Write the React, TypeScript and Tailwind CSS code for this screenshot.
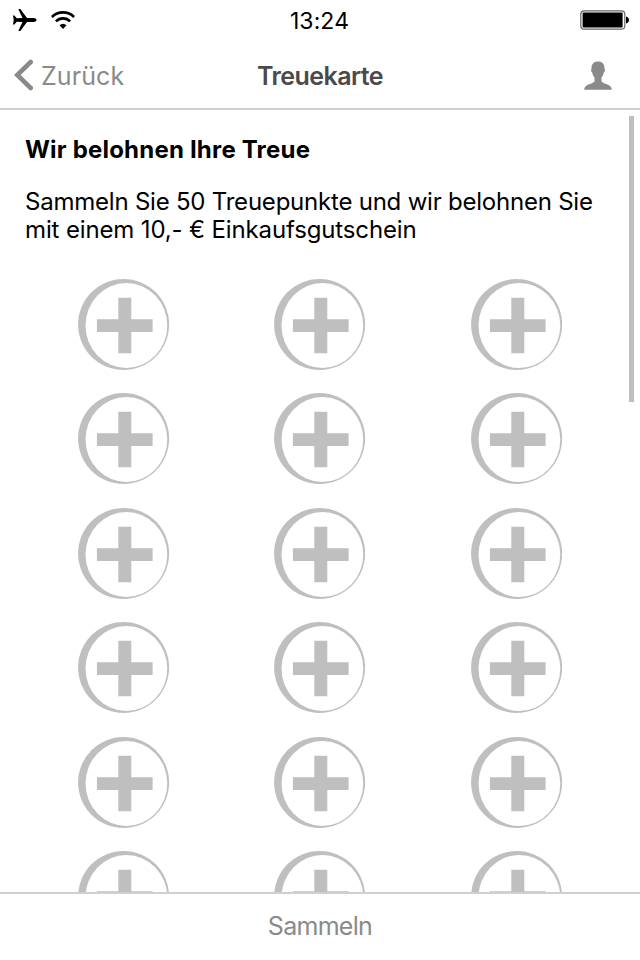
const stamps = Array.from({ length: 18 }, (_, index) => index);

function PlaneIcon() {
  return (
    <svg className="h-[24px] w-[25px]" viewBox="0 0 25 24">
      <path
        d="M1 7.500h1.400l2.300 2.700 5.800-.2L6.300 1h2l6.700 9.100h6.500c1.900 0 3 .9 3 1.900s-1.100 1.900-3 1.900H15L8.300 23h-2l4.200-9-5.800-.2-2.300 2.700H1l.7-4.500z"
        fill="#000"
      />
    </svg>
  );
}

function WifiIcon() {
  return (
    <svg className="h-[18px] w-[24px]" viewBox="0 0 24 18">
      <g fill="none" stroke="#000" strokeWidth="2.600">
        <path d="M.9 6a15.700 15.700 0 0 1 22.200 0" />
        <path d="M4.900 10.300a10 10 0 0 1 14.200 0" />
      </g>
      <path d="M8.500 14.200a5.300 5.300 0 0 1 7 0L12 18z" fill="#000" />
    </svg>
  );
}

function BatteryIcon() {
  return (
    <svg className="h-[20px] w-[49px]" viewBox="0 0 49 20">
      <rect
        x=".8"
        y=".8"
        width="44"
        height="18.400"
        rx="3.500"
        fill="#fff"
        stroke="#666"
        strokeWidth="1.200"
      />
      <rect x="2.600" y="2.600" width="40" height="14.800" rx="1" fill="#000" />
      <path d="M46 6.500c1.800.3 3 1.700 3 3.500s-1.200 3.200-3 3.500z" fill="#000" />
    </svg>
  );
}

function StampIcon() {
  return (
    <svg className="h-[92px] w-[92px]" viewBox="0 0 92 92">
      <circle cx="45.600" cy="45.500" r="45.500" fill="#bfbfbf" />
      <ellipse cx="48.400" cy="46.500" rx="40.900" ry="42.600" fill="#fff" />
      <path
        d="M40.300 18.800h13v21.500h21.300v12.800H53.300v21.100h-13V53.100H18.900V40.300h21.400z"
        fill="#bfbfbf"
      />
    </svg>
  );
}

export default function App() {
  return (
    <div className="relative flex h-[960px] w-[640px] flex-col overflow-hidden bg-white font-['Inter',sans-serif]">
      <div className="grid h-10 shrink-0 grid-cols-3 items-center pr-[11px] pl-3">
        <div className="flex items-center gap-[14px]">
          <PlaneIcon />
          <WifiIcon />
        </div>
        <span className="pt-0.5 pr-0.5 text-center text-[23px] leading-none tracking-[0.1px]">
          13:24
        </span>
        <div className="flex justify-end">
          <BatteryIcon />
        </div>
      </div>

      <header className="grid h-[70px] shrink-0 grid-cols-3 items-center border-b-2 border-[#d0d0d0] px-[14px] pt-[2px]">
        <button className="flex items-center gap-2 text-[25px] leading-none text-[#8a8a8a]">
          <svg className="h-[32px] w-[19px]" viewBox="0 0 19 32">
            <path
              d="M16.700 3 3.200 16l13.500 13"
              fill="none"
              stroke="#8a8a8a"
              strokeWidth="4.600"
              strokeLinecap="round"
            />
          </svg>
          <span className="pt-0.5 tracking-[0.1px]">Zurück</span>
        </button>
        <h1 className="pt-0.5 text-center text-[25px] leading-none font-semibold tracking-[-0.55px] text-[#4a4a4a]">
          Treuekarte
        </h1>
        <div className="flex justify-end pt-px pr-[14px]">
          <svg className="h-[29px] w-[28px]" viewBox="0 0 28 29">
            <path
              d="M14 .5c4.400 0 6.700 2.700 6.500 7.200.8.500.5 3.300-.7 3.900-.4 2.300-1.200 3.900-2.300 5.100v3.400c0 1 1.200 1.700 3.200 2.400 3.900 1.300 6.800 2.400 7.100 6.200H.2c.3-3.800 3.200-4.900 7.100-6.200 2-.7 3.200-1.400 3.200-2.400v-3.400c-1.100-1.200-1.900-2.800-2.300-5.100-1.200-.6-1.500-3.400-.7-3.900C7.300 3.200 9.600.5 14 .5z"
              fill="#8a8a8a"
            />
          </svg>
        </div>
      </header>

      <main className="h-[782px] shrink-0 overflow-hidden px-[25px] pt-[26px] text-black">
        <h2 className="text-[24px] leading-[28px] font-bold tracking-[0.2px]">
          Wir belohnen Ihre Treue
        </h2>
        <p className="mt-[24px] text-[24px] leading-[28px] tracking-[-0.22px] whitespace-nowrap">
          Sammeln Sie 50 Treuepunkte und wir belohnen Sie
          <br />
          <span className="tracking-[-0.14px]">
            mit einem 10,- € Einkaufsgutschein
          </span>
        </p>
        <div className="mt-[35px] ml-px grid w-[589px] auto-rows-[114.4px] grid-cols-3 justify-items-center">
          {stamps.map((stamp) => (
            <StampIcon key={stamp} />
          ))}
        </div>
      </main>

      <footer className="flex flex-1 items-center justify-center border-t-2 border-[#d0d0d0] text-[25px] tracking-[-0.7px] text-[#8a8a8a]">
        Sammeln
      </footer>

      <div className="absolute top-[116px] right-[6px] h-[286px] w-[5px] bg-[#bfbfbf]" />
    </div>
  );
}
